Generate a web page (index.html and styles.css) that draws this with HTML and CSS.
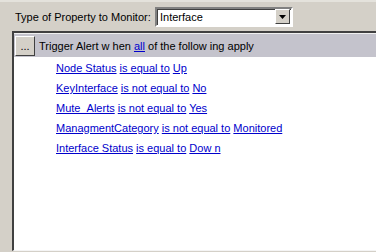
FILE: index.html
```html
<!DOCTYPE html>
<html lang="en">
<head>
    <meta charset="UTF-8">
    <title>Alert Conditions</title>
    <link rel="stylesheet" href="styles.css">
</head>
<body>
    <div class="propertyRow">
        <span class="propertyLabel">Type of Property to Monitor:</span>
        <div class="selectBox">
            <span class="selectValue">Interface</span>
            <span class="selectArrow">
                <svg width="7" height="4" viewBox="0 0 7 4"><path d="M0 0H7L3.5 4Z" fill="#000"/></svg>
            </span>
        </div>
    </div>

    <div class="conditionPanel">
        <div class="panelHeader">
            <button class="menuButton">...</button>
            <span class="headerText">Trigger Alert w hen <a href="#">all</a> of the follow ing apply</span>
        </div>
        <div class="ruleList">
            <div class="rule"><a href="#">Node Status</a> <a href="#">is equal to</a> <a href="#">Up</a></div>
            <div class="rule"><a href="#">KeyInterface</a> <a href="#">is not equal to</a> <a href="#">No</a></div>
            <div class="rule"><a href="#">Mute_Alerts</a> <a href="#">is not equal to</a> <a href="#">Yes</a></div>
            <div class="rule"><a href="#">ManagmentCategory</a> <a href="#">is not equal to</a> <a href="#">Monitored</a></div>
            <div class="rule"><a href="#">Interface Status</a> <a href="#">is equal to</a> <a href="#">Dow n</a></div>
        </div>
    </div>
</body>
</html>
```

FILE: styles.css
```css
html, body {
    margin: 0;
    height: 100%;
}
body {
    font-family: 'Liberation Sans', Arial, sans-serif;
    font-size: 11px;
    background-color: #d4d0c8;
    border-top: 2px solid #e4e2dc;
    box-sizing: border-box;
    display: flex;
    flex-direction: column;
    overflow: hidden;
}
.propertyRow {
    display: flex;
    align-items: center;
    height: 29px;
    padding-left: 15px;
}
.propertyLabel {
    width: 140px;
}
.selectBox {
    display: flex;
    align-items: center;
    width: 130px;
    height: 16px;
    background-color: #fff;
    border: 2px solid;
    border-color: #808080 #fff #fff #808080;
    box-shadow: inset 1px 1px 0 #404040;
    padding: 0 1px 0 3px;
}
.selectValue {
    flex: 1;
}
.selectArrow {
    width: 15px;
    height: 15px;
    box-sizing: border-box;
    background-color: #d4d0c8;
    border: 1px solid;
    border-color: #fff #404040 #404040 #fff;
    display: flex;
    align-items: center;
    justify-content: center;
}
.conditionPanel {
    flex: 1;
    margin: 0 0 1px 12px;
    background-color: #fff;
    border-top: 2px solid #404040;
    border-left: 2px solid #404040;
    border-bottom: 1px solid #f4f4f4;
    display: flex;
    flex-direction: column;
}
.panelHeader {
    display: flex;
    align-items: center;
    height: 23px;
    background-color: #c4c3cc;
    border-top: 1px solid #f0f0f0;
    padding-left: 1px;
}
.menuButton {
    width: 20px;
    height: 20px;
    padding: 0;
    margin-right: 4px;
    font-family: inherit;
    font-size: 11px;
    background-color: #d4d0c8;
    border: 1px solid;
    border-color: #fff #404040 #404040 #fff;
    line-height: 14px;
}
.headerText {
    color: #000;
}
a {
    color: #0000cc;
}
.ruleList {
    padding: 1px 0 0 42px;
}
.rule {
    height: 20px;
    line-height: 20px;
}
```
